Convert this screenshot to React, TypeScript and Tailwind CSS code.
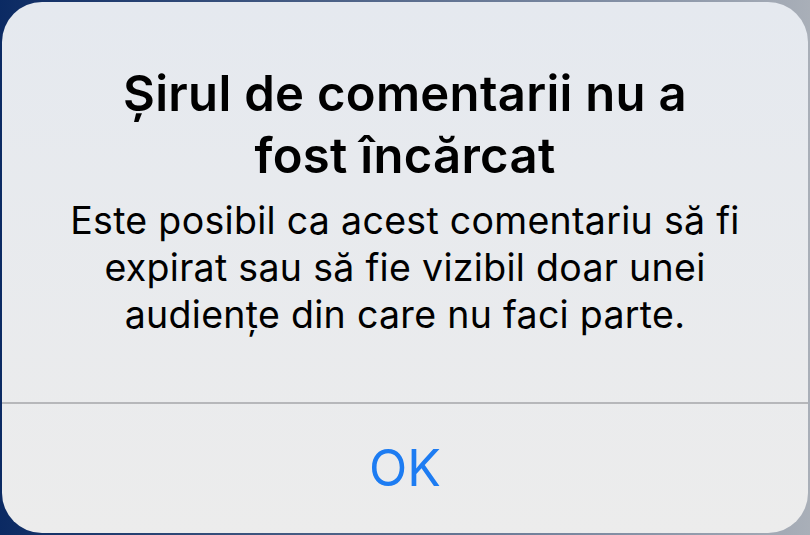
import React from 'react';

const App: React.FC = () => {
  return (
    <div className="w-[810px] h-[535px] bg-gradient-to-r from-[#0b2a63] via-[#5a6d8e] to-[#a9afb8] p-[2px] overflow-hidden">
      <div
        className="w-full h-full rounded-[40px] bg-gradient-to-b from-[#e5e9ef] to-[#ececec] flex flex-col overflow-hidden"
        style={{ fontFamily: 'Inter, "Noto Sans", sans-serif' }}
      >
        {/* Message */}
        <div className="h-[400px] flex flex-col items-center pt-[61px] px-2 text-center">
          <h1 className="text-[49px] leading-[62px] font-semibold text-black tracking-[0.3px] whitespace-nowrap">
            Șirul de comentarii nu a
            <br />
            fost încărcat
          </h1>
          <p className="mt-[10px] text-[37.5px] leading-[47px] text-black tracking-[0.3px] whitespace-nowrap">
            Este posibil ca acest comentariu să fi
            <br />
            expirat sau să fie vizibil doar unei
            <br />
            audiențe din care nu faci parte.
          </p>
        </div>

        {/* Divider */}
        <div className="h-[2px] bg-[#b6b7ba]" />

        {/* Action */}
        <button className="flex-1 flex items-center justify-center text-[50px] text-[#1d7cf2]">
          OK
        </button>
      </div>
    </div>
  );
};

export default App;
